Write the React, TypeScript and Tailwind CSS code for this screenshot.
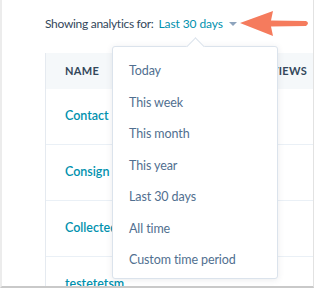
import React from "react";

const rows = ["Contact Us", "Consign", "Collected Items", "testetetsm"];
const items = ["Today", "This week", "This month", "This year", "Last 30 days", "All time", "Custom time period"];

export default function App() {
  return (
    <div className="w-[315px] h-[289px] bg-white overflow-hidden" style={{ fontFamily: "Lato, 'Open Sans', sans-serif" }}>
      <div className="relative w-[314px] h-[288px] border-l-2 border-b-2 border-r border-l-[#ececec] border-r-[#e2e2e2] border-b-[#c9c9c9] overflow-hidden">
        <div className="flex items-center h-[47px] pl-[43px] whitespace-nowrap">
          <span className="shrink-0 text-[12px] tracking-[-0.3px] text-[#33475b]">Showing analytics for:</span>
          <span className="shrink-0 ml-[5px] text-[12px] tracking-[-0.1px] text-[#0091ae]">Last 30 days</span>
          <svg width="8" height="5" viewBox="0 0 8 5" className="shrink-0 ml-[6px] mt-[1px]">
            <path d="M0 0 L8 0 L4 4 Z" fill="#8ea4bd" />
          </svg>
          <svg width="72" height="28" viewBox="0 0 72 28" className="shrink-0 ml-[2px]">
            <path d="M1 13 L34 1 L32 10.5 L67 11 Q71 13 67 16 L32 16.5 L34 26 Z" fill="#f57b5d" />
          </svg>
        </div>
        <div className="mt-[6px] ml-[43px] w-[268px] border-l border-[#e5eaf0]">
          <div className="h-[36px] bg-[#f5f8fa] flex items-center justify-between pl-[19px] pr-[6px] text-[11px] font-bold tracking-[0.3px] text-[#33475b]">
            <span>NAME</span>
            <span>VIEWS</span>
          </div>
          {rows.map((r) => (
            <div key={r} className="h-[56px] flex items-center pl-[19px] border-b border-[#eaf0f6]">
              <span className="text-[12.5px] font-semibold text-[#0091ae] whitespace-nowrap">{r}</span>
            </div>
          ))}
        </div>
        <div className="absolute left-[110px] top-[46px] w-[166px] h-[233px] bg-white border border-[#dbe3ec] rounded-[3px] shadow-[0_1px_6px_rgba(45,62,80,0.10)] pt-[9px]">
          <div className="absolute left-[76px] -top-[7px] w-[13px] h-[13px] bg-white border-l border-t border-[#dbe3ec] rotate-45" />
          {items.map((t) => (
            <div key={t} className="h-[31.5px] flex items-center pl-[16px] text-[12.5px] tracking-[-0.1px] text-[#516f90] whitespace-nowrap">
              {t}
            </div>
          ))}
        </div>
      </div>
    </div>
  );
}
